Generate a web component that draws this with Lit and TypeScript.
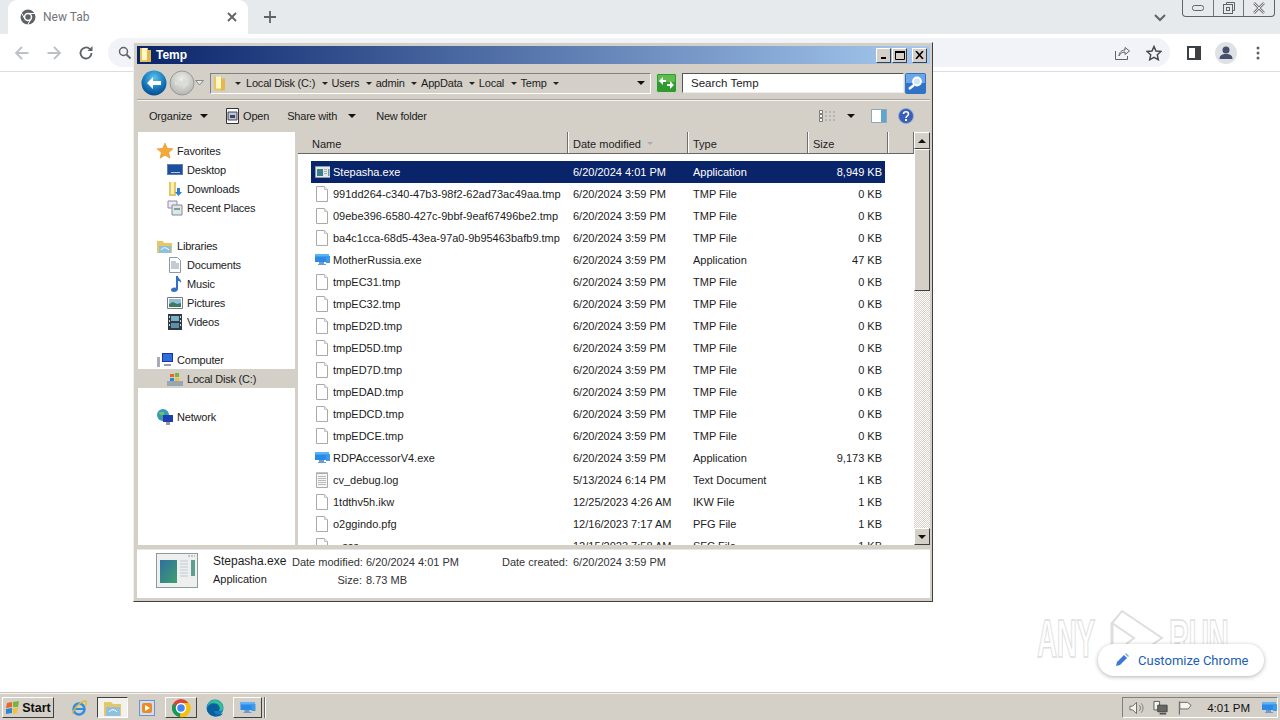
import { LitElement, css, html, svg } from "lit";
import { customElement } from "lit/decorators.js";

const ui = css`
  * { box-sizing: border-box; }
`;

const fileIcon = svg`<path d="M1.5 .5h8l3 3v12h-11z" fill="#fff" stroke="#a9a9a9"/><path d="M9.5 .5v3h3" fill="#eee" stroke="#c4c4c4"/>`;
const logIcon = svg`<path d="M1.5 1.5h11v14h-11z" fill="#f6f6f6" stroke="#a9a9a9"/><path d="M3 4.5h8M3 6.5h8M3 8.5h8M3 10.5h8M3 12.5h8" stroke="#b9b9b9"/><path d="M2 1v-1M4 1v-1M6 1v-1M8 1v-1M10 1v-1M12 1v-1" stroke="#888"/>`;
const monitorIcon = svg`<path d="M0 2h14v8H0z" fill="#2b8ae6"/><path d="M0 2h14v2.500H0z" fill="#5db4f5"/><path d="M11 4h4v7h-4z" fill="#3f9bea"/><path d="M4 10h5v2h2v1H3v-1h1z" fill="#6d9cc9"/>`;
const exeIcon = svg`<path d="M.5 2.500h15v11H.5z" fill="#e6e8ea" stroke="#8a9aa8"/><path d="M2 5h6v7H2z" fill="#3a7f8c"/><path d="M9 5h3v1H9zM9 7h3v1H9zM9 9h3v1H9z" fill="#aab"/><path d="M13 5h1.500v7H13z" fill="#6aa09a"/>`;

type Row = [string, string, string, string, string];
const d359 = "6/20/2024 3:59 PM";
const rows: Row[] = [
  ["exe", "Stepasha.exe", "6/20/2024 4:01 PM", "Application", "8,949 KB"],
  ["file", "991dd264-c340-47b3-98f2-62ad73ac49aa.tmp", d359, "TMP File", "0 KB"],
  ["file", "09ebe396-6580-427c-9bbf-9eaf67496be2.tmp", d359, "TMP File", "0 KB"],
  ["file", "ba4c1cca-68d5-43ea-97a0-9b95463bafb9.tmp", d359, "TMP File", "0 KB"],
  ["monitor", "MotherRussia.exe", d359, "Application", "47 KB"],
  ["file", "tmpEC31.tmp", d359, "TMP File", "0 KB"],
  ["file", "tmpEC32.tmp", d359, "TMP File", "0 KB"],
  ["file", "tmpED2D.tmp", d359, "TMP File", "0 KB"],
  ["file", "tmpED5D.tmp", d359, "TMP File", "0 KB"],
  ["file", "tmpED7D.tmp", d359, "TMP File", "0 KB"],
  ["file", "tmpEDAD.tmp", d359, "TMP File", "0 KB"],
  ["file", "tmpEDCD.tmp", d359, "TMP File", "0 KB"],
  ["file", "tmpEDCE.tmp", d359, "TMP File", "0 KB"],
  ["monitor", "RDPAccessorV4.exe", d359, "Application", "9,173 KB"],
  ["log", "cv_debug.log", "5/13/2024 6:14 PM", "Text Document", "1 KB"],
  ["file", "1tdthv5h.ikw", "12/25/2023 4:26 AM", "IKW File", "1 KB"],
  ["file", "o2ggindo.pfg", "12/16/2023 7:17 AM", "PFG File", "1 KB"],
  ["file", "_.sss", "12/15/2023 7:58 AM", "SFC File", "1 KB"],
];
const rowIcons: Record<string, unknown> = { file: fileIcon, log: logIcon, monitor: monitorIcon, exe: exeIcon };

const folder = svg`<path d="M1 1h8v14H1z" fill="#e9c65c"/><path d="M3 1h5v12H3z" fill="#fff6c9"/><path d="M8 3h4v12H8z" fill="#e3b94c"/>`;

const treeIcons: Record<string, unknown> = {
  star: svg`<path d="M8 0l2.300 5.300 5.700.5-4.300 3.800 1.300 5.600L8 12.200 3 15.200l1.300-5.600L0 5.800l5.700-.5z" fill="#f4a93a" stroke="#d98a20" stroke-width=".5"/>`,
  desktop: svg`<path d="M0 2h16v11H0z" fill="#5f7fa8"/><path d="M1 3h14v9H1z" fill="#1d4fa0"/><path d="M4 10h9v1H4z" fill="#bcd"/>`,
  downloads: svg`<path d="M2 1h7v14H2z" fill="#e6c768"/><path d="M4 1h3v12H4z" fill="#fbefb4"/><path d="M10 7h3v4h2l-3.500 4L8 11h2z" fill="#2b7fd0"/>`,
  recent: svg`<path d="M1 1h9v7H1z" fill="#e7edf3" stroke="#98a"/><path d="M5 5h10v10H5z" fill="#dfe6ea" stroke="#889"/><path d="M7 8h6v2H7z" fill="#7fa08a"/>`,
  libraries: svg`<path d="M0 3h6l1 2h8v10H0z" fill="#e6c768"/><path d="M2 8h12v7H2z" fill="#8fc0dd"/><path d="M4 12c2-3 5-3 8 0" stroke="#fff" fill="none"/>`,
  documents: svg`<path d="M2.500 .5h8l3 3v12h-11z" fill="#fff" stroke="#8a98a8"/><path d="M4 5h5M4 7h8M4 9h8M4 11h8" stroke="#8796a8"/>`,
  music: svg`<path d="M9 0h2c0 3 4 3 3 7-1-2-2-2-3-2v8c0 2-2 3-4 3s-3-1-3-2c0-2 3-3 5-2z" fill="#2f71c5"/>`,
  pictures: svg`<path d="M.5 2.500h15v11H.5z" fill="#fff" stroke="#778"/><path d="M2 4h12v8H2z" fill="#8fc0d8"/><path d="M2 9l4-2 4 2 4-1v4H2z" fill="#3f7a5e"/>`,
  videos: svg`<path d="M1 0h14v16H1z" fill="#2e3a44"/><path d="M4 2h8v5H4z" fill="#7db0c4"/><path d="M4 9h8v5H4z" fill="#5d90a8"/><path d="M2 2h1v2H2zM2 6h1v2H2zM2 10h1v2H2zM13 2h1v2h-1zM13 6h1v2h-1zM13 10h1v2h-1z" fill="#ddd"/>`,
  computer: svg`<path d="M5 1h11v9H5z" fill="#1f2fb0"/><path d="M6 2h9v7H6z" fill="#2f6fd8"/><path d="M0 5h3v10H0z" fill="#aab"/><path d="M7 12h7v2H7z" fill="#99a"/>`,
  disk: svg`<path d="M0 10h16v5H0z" fill="#9aa5ad"/><path d="M3 3h4v3H3z" fill="#e8662c"/><path d="M8 2h4v4H8z" fill="#7cb33a"/><path d="M3 7h4v3H3z" fill="#2f86d0"/><path d="M8 7h4v3H8z" fill="#f1c232"/>`,
  network: svg`<circle cx="6" cy="6" r="6" fill="#3a9ab0"/><path d="M2 3h5v3H3z" fill="#6cc070"/><path d="M6 6h10v7H6z" fill="#1f3fb0"/><path d="M9 13h4v3H9z" fill="#99a"/>`,
};

@customElement("chrome-bar")
export class ChromeBar extends LitElement {
  static styles = [ui, css`
    :host { display: block; font-family: Roboto, "Liberation Sans", sans-serif; }
    .strip { height: 34px; background: #e7eaed; display: flex; align-items: center; padding-left: 8px; }
    .tab { width: 240px; height: 34px; background: #fff; border-radius: 9px 9px 0 0; display: flex; align-items: center; padding: 0 8px 0 12px; }
    .tab .title { flex: 1; margin-left: 7px; font-size: 12px; color: #70757a; }
    .plus { margin-left: 14px; }
    .spacer { flex: 1; }
    .caption { align-self: flex-start; display: flex; width: 93px; height: 17px; margin: 0 5px 0 15px; border: 1px solid #5f6368; border-top: 0; border-radius: 0 0 4px 4px; }
    .caption div { flex: 1; display: flex; align-items: center; justify-content: center; border-left: 1px solid #70757a; }
    .caption div:first-child { border-left: 0; }
    .tools { height: 38px; background: #fff; border-bottom: 1px solid #dadce0; display: flex; align-items: center; padding-left: 14px; gap: 16px; }
    .pill { width: 1062px; height: 29px; margin: 0 0 0 -2px; border-radius: 15px; background: #f1f3f8; display: flex; align-items: center; padding: 0 8px 0 10px; }
    .pill .push { flex: 1; }
    .pill svg + svg { margin-left: 16px; }
    .tools .after { display: flex; align-items: center; gap: 14px; margin-left: 1px; }
    .tools .menu { margin-left: 2px; }
  `];
  render() {
    return html`
      <div class="strip">
        <div class="tab">
          <svg width="16" height="16" viewBox="0 0 16 16"><circle cx="8" cy="8" r="7.500" fill="#5f6368"/><circle cx="8" cy="8" r="3.500" fill="#5f6368" stroke="#fff" stroke-width="1.500"/><path d="M8 4.500h7M5 10L1.500 4M11 10l-3.500 6" stroke="#fff" stroke-width="1"/></svg>
          <span class="title">New Tab</span>
          <svg width="16" height="16" viewBox="0 0 16 16"><path d="M4 4l8 8M12 4l-8 8" stroke="#5f6368" stroke-width="1.800"/></svg>
        </div>
        <svg class="plus" width="16" height="16" viewBox="0 0 16 16"><path d="M8 2v12M2 8h12" stroke="#5f6368" stroke-width="1.800"/></svg>
        <div class="spacer"></div>
        <svg width="14" height="14" viewBox="0 0 14 14"><path d="M2 5l5 5 5-5" fill="none" stroke="#5f6368" stroke-width="2"/></svg>
        <div class="caption">
          <div><svg width="14" height="8"><rect x="1.500" y="1.500" width="11" height="5" rx="2" fill="none" stroke="#5f6368"/></svg></div>
          <div><svg width="14" height="14"><path d="M4.500 3.500V1.500h8v8h-2" fill="none" stroke="#5f6368"/><rect x="1.500" y="3.500" width="9" height="9" fill="none" stroke="#5f6368"/><rect x="4.500" y="6.500" width="3" height="3" fill="none" stroke="#5f6368"/></svg></div>
          <div><svg width="14" height="12"><path d="M2 1l10 10M12 1L2 11" stroke="#777" stroke-width="2.500"/><path d="M2 1l10 10M12 1L2 11" stroke="#e7eaed" stroke-width="1"/></svg></div>
        </div>
      </div>
      <div class="tools">
        <svg width="16" height="16" viewBox="0 0 16 16"><path d="M14.500 8H2M8 2L2 8l6 6" fill="none" stroke="#bdc1c6" stroke-width="1.800"/></svg>
        <svg width="16" height="16" viewBox="0 0 16 16"><path d="M1.500 8H14M8 2l6 6-6 6" fill="none" stroke="#bdc1c6" stroke-width="1.800"/></svg>
        <svg width="16" height="16" viewBox="0 0 16 16"><path d="M13.500 8a5.500 5.500 0 1 1-1.600-3.900" fill="none" stroke="#5f6368" stroke-width="1.800"/><path d="M14.500 1v5h-5z" fill="#5f6368"/></svg>
        <div class="pill">
          <svg width="14" height="14" viewBox="0 0 14 14"><circle cx="5.500" cy="5.500" r="4" fill="none" stroke="#5f6368" stroke-width="1.500"/><path d="M8.500 8.500l4 4" stroke="#5f6368" stroke-width="1.800"/></svg>
          <div class="push"></div>
          <svg width="16" height="16" viewBox="0 0 16 16"><path d="M1.500 6v8.500h12V11" fill="none" stroke="#5f6368"/><path d="M5 11c0-4 3-6 6-6V2.500L15.500 6 11 9.500V7c-3 0-5 1.500-6 4z" fill="none" stroke="#5f6368"/></svg>
          <svg width="16" height="16" viewBox="0 0 16 16"><path d="M8 1.500l2 4.500 5 .5-3.700 3.300 1 4.900L8 12.300l-4.300 2.400 1-4.900L1 6.500 6 6z" fill="none" stroke="#45494d" stroke-width="1.500"/></svg>
        </div>
        <div class="after">
          <svg width="14" height="14" viewBox="0 0 14 14"><rect x="1" y="1" width="12" height="12" fill="#fff" stroke="#3c4043" stroke-width="2"/><rect x="8" y="1" width="5" height="12" fill="#3c4043"/></svg>
          <svg width="22" height="22" viewBox="0 0 22 22"><circle cx="11" cy="11" r="11" fill="#dee1e6"/><circle cx="11" cy="8" r="3.500" fill="#474f6b"/><path d="M4.500 17c0-4 3-5 6.500-5s6.500 1 6.500 5z" fill="#474f6b"/></svg>
          <svg class="menu" width="10" height="14" viewBox="0 0 10 14"><circle cx="5" cy="2" r="1.500" fill="#5f6368"/><circle cx="5" cy="7" r="1.500" fill="#5f6368"/><circle cx="5" cy="12" r="1.500" fill="#5f6368"/></svg>
        </div>
      </div>
    `;
  }
}

@customElement("explorer-window")
export class ExplorerWindow extends LitElement {
  static styles = [ui, css`
    :host {
      position: absolute; left: 133px; top: 42px; width: 800px; height: 560px;
      display: flex; flex-direction: column; padding: 3px 2px 3px 3px;
      background: #d4d0c8; border: 1px solid; border-color: #f2f0ea #404040 #404040 #f2f0ea;
      font-family: "Liberation Sans", Arial, sans-serif; font-size: 11px; color: #1c1c1c;
    }
    .title { height: 18px; flex: none; display: flex; align-items: center; padding: 0 3px 0 2px; background: linear-gradient(90deg, #0a246a, #a6caf0); color: #fff; font-weight: 700; font-size: 12px; }
    .title span { margin-left: 3px; flex: 1; }
    .cap { width: 15px; height: 15px; background: #d4d0c8; border: 1px solid; border-color: #fff #404040 #404040 #fff; display: flex; align-items: center; justify-content: center; margin-left: 1px; }
    .cap.x { margin-left: 5px; }
    .addr { height: 35px; flex: none; display: flex; align-items: center; padding: 3px 0 0 4px; }
    .crumbs { width: 441px; height: 21px; margin-left: 6px; padding-left: 2px; border: 1px solid; border-color: #808080 #fff #fff #808080; display: flex; align-items: center; letter-spacing: -.2px; }
    .crumb { display: flex; align-items: center; }
    .crumb i { width: 0; height: 0; border: 3px solid transparent; border-top: 3px solid #222; border-bottom: 0; margin: 0 4px 0 6.400px; }
    .crumb:first-of-type i { margin-left: 8px; margin-right: 5px; }
    .crumbs .push { flex: 1; }
    .drop { width: 0; height: 0; border: 4px solid transparent; border-top: 4px solid #111; border-bottom: 0; }
    .crumbs .drop { margin-right: 5px; }
    .go { margin-left: 5px; }
    .search { width: 222px; height: 20px; margin-left: 5px; background: #fff; border: 1px solid; border-color: #555 #eee #eee #555; padding-left: 8px; display: flex; align-items: center; font-size: 11.500px; }
    .find { margin-left: 1px; }
    .bar { height: 33px; flex: none; display: flex; align-items: center; padding-left: 12px; border-top: 1px solid #a8a59e; box-shadow: inset 0 1px #f4f2ec; letter-spacing: -.2px; }
    .bar .drop { margin: 0 17px 0 8px; }
    .bar .drop.share { margin: 0 20px 0 11px; }
    .bar .push { flex: 1; }
    .bar .item { display: flex; align-items: center; gap: 3px; margin-right: 18px; }
    .bar svg.views { margin-right: 12px; }
    .bar .drop.v { margin: 0 16px 0 0; }
    .bar svg.help { margin: 0 16px 0 11px; }
    .panes { flex: 1; min-height: 0; display: flex; background: #d4d0c8; }
    nav { width: 157px; flex: none; margin-left: 1px; background: #fff; padding-top: 9px; letter-spacing: -.2px; }
    .node { height: 19px; display: flex; align-items: center; padding-left: 19px; gap: 4px; }
    .node.sub { padding-left: 29px; }
    .node.on { background: #d4d0c8; }
    .node.gap { margin-top: 19px; }
    .split { width: 3px; flex: none; }
    .files { flex: 1; min-width: 0; display: flex; flex-direction: column; }
    .head { height: 22px; flex: none; display: flex; background: #d4d0c8; border-bottom: 1px solid #666; }
    .head div { display: flex; align-items: center; padding: 2px 0 0 5px; border-right: 1px solid #6f6f6f; box-shadow: 1px 0 #fff; color: #222; }
    .head div:first-child { width: 270px; padding-left: 14px; }
    .head .w120 { width: 120px; }
    .head .w80 { width: 80px; }
    .head .rest { width: 26px; }
    .sort { width: 0; height: 0; border: 3px solid transparent; border-top: 3px solid #aaa; border-bottom: 0; margin-left: 6px; }
    .list { flex: 1; min-height: 0; overflow: hidden; background: #fff; padding: 7px 0 0 13px; }
    .row { width: 574px; height: 22px; display: grid; grid-template-columns: 257px 120px 120px 77px; align-items: center; }
    .row.sel { background: #0a246a; color: #fff; }
    .row .name { display: flex; align-items: center; gap: 3px; padding-left: 4px; }
    .row .name svg { width: 15px; height: 16px; flex: none; }
    .row .c { padding-left: 5px; }
    .row .size { text-align: right; padding-right: 3px; }
    .scroll { width: 16px; flex: none; display: flex; flex-direction: column; background: repeating-conic-gradient(#d4d0c8 0 25%, #fff 0 50%) 0 0 / 2px 2px; }
    .sb { height: 17px; flex: none; background: #d4d0c8; border: 1px solid; border-color: #fff #404040 #404040 #fff; display: flex; align-items: center; justify-content: center; }
    .thumb { height: 142px; flex: none; background: #d4d0c8; border: 1px solid; border-color: #fff #404040 #404040 #fff; }
    .scroll .push { flex: 1; }
    .up { width: 0; height: 0; border: 4px solid transparent; border-bottom: 4px solid #111; border-top: 0; }
    .details { height: 49px; flex: none; margin-top: 4px; background: #fff; display: flex; padding: 2px 0 0 19px; border-top: 1px solid #e8e6e0; }
    .details svg { margin-top: 1px; }
    .dname { width: 79px; margin-left: 15px; font-size: 12px; line-height: 18px; }
    .dname div + div { font-size: 11px; }
    .dgrid { display: grid; grid-template-columns: 70px 140px 68px auto; grid-auto-rows: 18px; align-items: center; padding-top: 1px; color: #333; white-space: nowrap; }
    .dgrid .l { text-align: right; }
    .dgrid .v { padding-left: 4px; }
    .dgrid .v2 { padding-left: 3px; }
  `];

  private node(icon: string, label: string, cls = "") {
    return html`<div class="node ${cls}"><svg width="16" height="16" viewBox="0 0 16 16">${treeIcons[icon]}</svg><span>${label}</span></div>`;
  }

  render() {
    return html`
      <div class="title">
        <svg width="14" height="16" viewBox="0 0 14 16">${folder}</svg>
        <span>Temp</span>
        <div class="cap"><svg width="8" height="8"><path d="M1 6h5v2H1z" fill="#000"/></svg></div>
        <div class="cap"><svg width="10" height="9"><path d="M.5 1.500h9v7h-9z" fill="none" stroke="#000"/><path d="M0 0h10v2H0z" fill="#000"/></svg></div>
        <div class="cap x"><svg width="9" height="8"><path d="M1 0l7 8M8 0L1 8" stroke="#000" stroke-width="1.600"/></svg></div>
      </div>
      <div class="addr">
        <svg width="54" height="28" viewBox="0 0 54 28">
          <defs>
            <radialGradient id="blue" cx=".5" cy=".3" r=".8"><stop offset="0" stop-color="#5cc4ec"/><stop offset=".6" stop-color="#0f6fb5"/><stop offset="1" stop-color="#0a3a78"/></radialGradient>
            <radialGradient id="grey" cx=".5" cy=".35" r=".8"><stop offset="0" stop-color="#eeeeea"/><stop offset="1" stop-color="#a8a8a4"/></radialGradient>
          </defs>
          <circle cx="13" cy="14" r="12.500" fill="url(#blue)"/>
          <path d="M6 14l6-6v4h8v4h-8v4z" fill="#fff"/>
          <circle cx="41" cy="14" r="12" fill="url(#grey)" stroke="#999"/>
          <path d="M48 14l-6-6v4h-8v4h8v4z" fill="#dcdcd8"/>
        </svg>
        <svg width="9" height="6" viewBox="0 0 9 6"><path d="M.5 .5h8L4.500 5z" fill="#e8e6e0" stroke="#888"/></svg>
        <div class="crumbs">
          <svg width="14" height="17" viewBox="0 0 14 16">${folder}</svg>
          ${["Local Disk (C:)", "Users", "admin", "AppData", "Local", "Temp"].map((c) => html`<div class="crumb"><i></i><span>${c}</span></div>`)}
          <div class="crumb"><i></i></div>
          <div class="push"></div>
          <div class="drop"></div>
        </div>
        <svg class="go" width="21" height="20" viewBox="0 0 21 20"><rect x=".5" y=".5" width="20" height="19" rx="2" fill="#2f9a2f" stroke="#c7d8c0"/><rect x="2" y="2" width="17" height="7" fill="#5dbb4f"/><path d="M3 8l4-4v3h3v2H7v3zM18 12l-4 4v-3h-3v-2h3V8z" fill="#fff"/></svg>
        <div class="search">Search Temp</div>
        <svg class="find" width="21" height="21" viewBox="0 0 21 21"><rect width="21" height="21" rx="2" fill="#2f72c8"/><rect x="1" y="1" width="19" height="9" fill="#6aa6e8"/><circle cx="12" cy="8.500" r="4" fill="#cfe6fa" stroke="#fff" stroke-width="1.800"/><path d="M9 12l-5 4" stroke="#fff" stroke-width="2.500"/></svg>
      </div>
      <div class="bar">
        <span>Organize</span><div class="drop"></div>
        <div class="item">
          <svg width="15" height="16" viewBox="0 0 15 16"><path d="M1.500 .5h12v15h-12z" fill="#fff" stroke="#333"/><path d="M3 4h9v8H3z" fill="#b9c6dc" stroke="#445"/><path d="M5 7h5v3H5z" fill="#445"/></svg>
          <span>Open</span>
        </div>
        <span>Share with</span><div class="drop share"></div>
        <span>New folder</span>
        <div class="push"></div>
        <svg class="views" width="16" height="14" viewBox="0 0 16 14"><path d="M.5 1.500h3v3h-3zM.5 5.500h3v3h-3zM.5 9.500h3v3h-3z" fill="#fff" stroke="#777"/><path d="M6 3h2M10 3h2M14 3h2M6 7h2M10 7h2M14 7h2M6 11h2M10 11h2M14 11h2" stroke="#999"/></svg>
        <div class="drop v"></div>
        <svg width="16" height="16" viewBox="0 0 16 16"><path d="M.5 1.500h15v13H.5z" fill="#fff" stroke="#8fa5b8"/><path d="M10 2h5v12h-5z" fill="#5fa5cc"/></svg>
        <svg class="help" width="16" height="16" viewBox="0 0 16 16"><circle cx="8" cy="8" r="7.500" fill="#3a5fb8" stroke="#93a8d8"/><path d="M5.500 6c0-3 5-3 5 0 0 2-2.500 2-2.500 4" fill="none" stroke="#fff" stroke-width="1.600"/><path d="M7 11h2v2H7z" fill="#fff"/></svg>
      </div>
      <div class="panes">
        <nav>
          ${this.node("star", "Favorites")}
          ${this.node("desktop", "Desktop", "sub")}
          ${this.node("downloads", "Downloads", "sub")}
          ${this.node("recent", "Recent Places", "sub")}
          ${this.node("libraries", "Libraries", "gap")}
          ${this.node("documents", "Documents", "sub")}
          ${this.node("music", "Music", "sub")}
          ${this.node("pictures", "Pictures", "sub")}
          ${this.node("videos", "Videos", "sub")}
          ${this.node("computer", "Computer", "gap")}
          ${this.node("disk", "Local Disk (C:)", "sub on")}
          ${this.node("network", "Network", "gap")}
        </nav>
        <div class="split"></div>
        <div class="files">
          <div class="head">
            <div>Name</div>
            <div class="w120">Date modified<span class="sort"></span></div>
            <div class="w120">Type</div>
            <div class="w80">Size</div>
            <div class="rest"></div>
          </div>
          <div class="list">
            ${rows.map(
              (r, i) => html`<div class="row ${i === 0 ? "sel" : ""}">
                <div class="name"><svg viewBox="0 0 15 16">${rowIcons[r[0]]}</svg><span>${r[1]}</span></div>
                <div class="c">${r[2]}</div>
                <div class="c">${r[3]}</div>
                <div class="size">${r[4]}</div>
              </div>`
            )}
          </div>
        </div>
        <div class="scroll">
          <div class="sb"><div class="up"></div></div>
          <div class="thumb"></div>
          <div class="push"></div>
          <div class="sb"><div class="drop"></div></div>
        </div>
      </div>
      <div class="details">
        <svg width="42" height="35" viewBox="0 0 42 35">
          <defs><linearGradient id="scr" x1="0" y1="0" x2="1" y2="1"><stop offset="0" stop-color="#2f6f9f"/><stop offset="1" stop-color="#3f9f6f"/></linearGradient></defs>
          <rect x=".5" y=".5" width="41" height="34" fill="#eef0f0" stroke="#8f9aa0"/>
          <rect x="4" y="7" width="17" height="23" fill="url(#scr)"/>
          <path d="M24 8h8M24 11h8M24 14h8M24 17h8M24 20h8M24 23h8" stroke="#c4c8cc"/>
          <rect x="35" y="7" width="4" height="16" fill="#5f9f8f"/>
          <path d="M32 3h7" stroke="#99a" stroke-dasharray="2 1"/>
        </svg>
        <div class="dname"><div>Stepasha.exe</div><div>Application</div></div>
        <div class="dgrid">
          <div class="l">Date modified:</div><div class="v">6/20/2024 4:01 PM</div>
          <div>Date created:</div><div class="v2">6/20/2024 3:59 PM</div>
          <div class="l">Size:</div><div class="v">8.73 MB</div>
        </div>
      </div>
    `;
  }
}

@customElement("task-bar")
export class TaskBar extends LitElement {
  static styles = [ui, css`
    :host { display: flex; align-items: center; height: 28px; flex: none; background: #d4d0c8; border-top: 1px solid #c9c5bc; box-shadow: inset 0 1px #f6f4ee; padding: 2px 2px 0 2px; font-family: "Liberation Sans", Arial, sans-serif; font-size: 11.500px; color: #111; }
    .btn { height: 21px; display: flex; align-items: center; justify-content: center; border: 1px solid; border-color: #fff #404040 #404040 #fff; }
    .start { width: 52px; gap: 1px; font-weight: 700; font-size: 12.500px; }
    .ie { margin-left: 16px; }
    .task { width: 32px; }
    .pressed { width: 31px; border-color: #404040 #fff #fff #404040; background: #f3f1ec; margin-left: 9px; }
    .media { margin: 0 10px 0 11px; }
    .edge { margin: 0 9px; }
    .last { width: 29px; }
    .sep { width: 2px; height: 21px; margin-left: 2px; border-left: 1px solid #666; border-right: 1px solid #fff; }
    .push { flex: 1; }
    .tray { width: 156px; height: 21px; display: flex; align-items: center; padding-left: 6px; border: 1px solid; border-color: #808080 #fff #fff #808080; }
    .tray .clock { margin: 0 12px 0 15px; white-space: nowrap; }
    .tray svg + svg { margin-left: 9px; }
  `];
  render() {
    return html`
      <div class="btn start">
        <svg width="16" height="16" viewBox="0 0 16 16"><path d="M2 3l5-1v5l-6 1z" fill="#e8662c"/><path d="M8 2l6-1-1 6H8z" fill="#7cb33a"/><path d="M1 9l6-1v5l-6 1z" fill="#2f86d0"/><path d="M8 8h5l-1 5-4 1z" fill="#f1c232"/></svg>
        <span>Start</span>
      </div>
      <svg class="ie" width="18" height="18" viewBox="0 0 18 18"><circle cx="9" cy="10" r="5.500" fill="none" stroke="#2f8fdc" stroke-width="2.500"/><path d="M4 10h10" stroke="#2f8fdc" stroke-width="2"/><path d="M2 15C4 9 11 2 16 2c1 1 0 4-1 5" fill="none" stroke="#e5b93a" stroke-width="1.300"/></svg>
      <div class="btn task pressed"><svg width="20" height="18" viewBox="0 0 20 18"><path d="M1 3h7l2 2h8v12H1z" fill="#e6c768"/><path d="M3 8h14v9H3z" fill="#8fc0dd"/><path d="M6 13c2-3 6-3 8 0" stroke="#fff" fill="none"/></svg></div>
      <svg class="media" width="16" height="18" viewBox="0 0 16 18"><rect x=".5" y="1.500" width="15" height="15" fill="#cfe0f2" stroke="#6f93c8"/><rect x="3" y="4" width="10" height="10" rx="2" fill="#ee8a1f"/><path d="M6 6l5 3-5 3z" fill="#fff"/></svg>
      <div class="btn task"><svg width="20" height="20" viewBox="0 0 20 20"><circle cx="10" cy="10" r="9" fill="#db4437"/><path d="M10 10L2 6a9 9 0 0 0 7 13z" fill="#0f9d58"/><path d="M10 5h8a9 9 0 0 1-9 14z" fill="#f4c20d"/><circle cx="10" cy="10" r="4.500" fill="#4285f4" stroke="#fff" stroke-width="1.500"/></svg></div>
      <svg class="edge" width="18" height="18" viewBox="0 0 18 18"><circle cx="9" cy="9" r="8.500" fill="#0f7fc4"/><path d="M1 10c1-5 9-7 13-3 2 2 2 5 0 5H8c0 3 4 5 9 2-2 4-7 4-10 3-3-1-6-4-6-7z" fill="#0b5f9e"/><path d="M9 1c4 0 8 3 8 8 0 3-3 3-4 3 2-3 0-8-6-8-3 0-5 2-6 4 1-4 4-7 8-7z" fill="#37c08f"/></svg>
      <div class="btn task last"><svg width="20" height="16" viewBox="0 0 15 16">${monitorIcon}</svg></div>
      <div class="sep"></div>
      <div class="push"></div>
      <div class="tray">
        <svg width="16" height="16" viewBox="0 0 16 16"><path d="M1 6h3l4-4v12l-4-4H1z" fill="#f4f2ec" stroke="#666"/><path d="M11 5c1.500 2 1.500 4 0 6M13 3c2.500 3 2.500 7 0 10" fill="none" stroke="#777"/></svg>
        <svg width="16" height="16" viewBox="0 0 16 16"><path d="M1 1h6v9H1z" fill="#f4f2ec" stroke="#555"/><path d="M5 5h10v7H5z" fill="#666" stroke="#444"/><path d="M7 14h7" stroke="#555" stroke-width="2"/></svg>
        <svg width="16" height="16" viewBox="0 0 16 16"><path d="M2.500 1v14" stroke="#555"/><path d="M3 2h8l4 3-3 4H3z" fill="#f6f4ee" stroke="#666"/></svg>
        <span class="clock">4:01 PM</span>
        <svg width="16" height="16" viewBox="0 0 15 16">${monitorIcon}</svg>
      </div>
    `;
  }
}

@customElement("app-root")
export class AppRoot extends LitElement {
  static styles = [ui, css`
    :host { display: flex; flex-direction: column; position: relative; width: 1280px; height: 720px; overflow: hidden; background: #fff; }
    main { flex: 1; background: #fff; }
    .mark { position: absolute; left: 1037px; top: 608px; width: 200px; height: 60px; display: flex; align-items: center; font: 700 54px "Liberation Sans", sans-serif; color: #fff; -webkit-text-stroke: 1.500px #dedede; }
    .mark span { display: block; width: 68px; transform: scaleX(.52); transform-origin: left center; white-space: nowrap; letter-spacing: -1px; }
    .mark svg { margin: 0 3px 0 5px; flex: none; }
    .chip { position: absolute; left: 1098px; top: 644px; width: 166px; height: 32px; border-radius: 16px; background: #fff; box-shadow: 0 1px 4px rgba(60, 64, 67, .4); display: flex; align-items: center; padding-left: 17px; gap: 9px; font: 13px Roboto, "Liberation Sans", sans-serif; color: #1a5fb4; }
  `];
  render() {
    return html`
      <chrome-bar></chrome-bar>
      <main></main>
      <task-bar></task-bar>
      <explorer-window></explorer-window>
      <div class="mark">
        <span>ANY</span>
        <svg width="56" height="58" viewBox="0 0 56 58"><path d="M2 14L12 2l40 27-40 27-10-10 22-17z" fill="#fff" stroke="#dedede" stroke-width="2"/><path d="M2 14v32" stroke="#dedede" stroke-width="3"/></svg>
        <span>RUN</span>
      </div>
      <div class="chip">
        <svg width="14" height="14" viewBox="0 0 14 14"><path d="M1 13l1-4 7-7 3 3-7 7z" fill="#3b78d8"/><path d="M10 1l1-1 3 3-1 1z" fill="#7aa7e8"/></svg>
        <span>Customize Chrome</span>
      </div>
    `;
  }
}
